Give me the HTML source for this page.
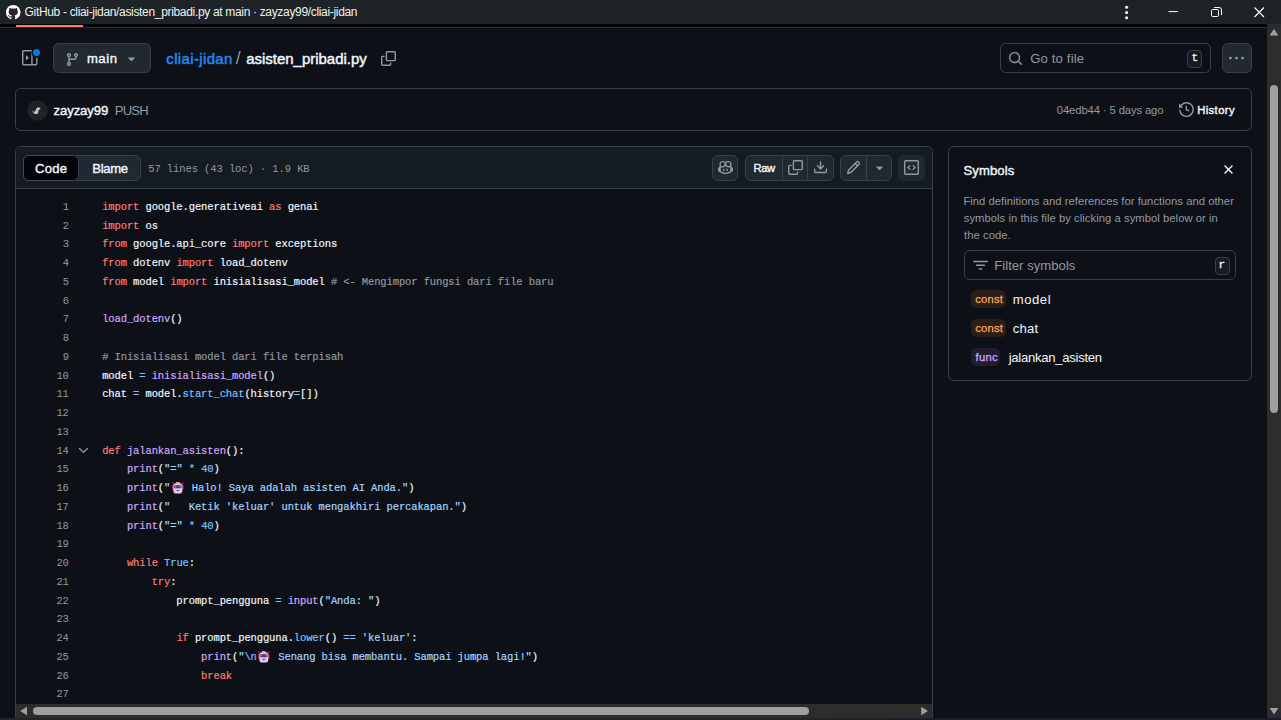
<!DOCTYPE html>
<html><head><meta charset="utf-8">
<style>
*{box-sizing:border-box;margin:0;padding:0}
html,body{width:1281px;height:720px;overflow:hidden;background:#0d1117;}
body{position:relative;font-family:"Liberation Sans",sans-serif;color:#f0f6fc;font-size:13px;}
.abs{position:absolute}
.t{position:absolute;white-space:pre;line-height:1;}
.mono{font-family:"Liberation Mono",monospace}
svg{position:absolute;overflow:visible}
/* title bar */
#titlebar{left:0;top:0;width:1281px;height:24px;background:#1e2327}
#blackband{left:0;top:24px;width:1267px;height:3px;background:#010409}
#hdrline{left:0;top:27px;width:1267px;height:1px;background:#2a313a}
#orange{left:15.5px;top:25px;width:67.5px;height:2.4px;background:#f78166}
/* scrollbars */
#vsb{left:1267px;top:24px;width:14px;height:694px;background:#2c2c2c}
#vthumb{left:1270px;top:85px;width:8px;height:328px;background:#9f9f9f;border-radius:4px}
#hsb{left:16px;top:704px;width:916px;height:14px;background:#2c2c2c}
#hthumb{left:33px;top:707px;width:776px;height:8px;background:#9f9f9f;border-radius:4px}
#botstrip{left:0;top:717.6px;width:1281px;height:2.4px;background:linear-gradient(90deg,#242424 0,#242424 62%,#1d1a2d 73%,#1d1a2d 100%)}
/* boxes */
.btn{position:absolute;background:#212830;border:1px solid #394049;border-radius:5.6px}
.box{position:absolute;border:1px solid #394049;border-radius:5.6px}

.ln{position:absolute;left:0;width:932px;height:18.75px}
.ln i{font-style:normal}
.no{position:absolute;right:863.2px;top:0;color:#9198a1}
.cd{position:absolute;left:102.2px;top:0;white-space:pre;-webkit-text-stroke:.18px}
.k{color:#ff7b72}.w{color:#f0f6fc}.c{color:#9198a1}.f{color:#d2a8ff}.b{color:#79c0ff}.s{color:#a5d6ff}
.emo{display:inline-block;width:15.4px;height:11.6px;position:relative;vertical-align:-2.5px;letter-spacing:0}
.emo svg{left:1.7px;top:0}
</style></head><body>
<!-- TITLE BAR -->
<div class="abs" id="titlebar"></div>
<div class="abs" id="blackband"></div>
<div class="abs" id="hdrline"></div>
<div class="abs" id="orange"></div>
<div class="t" id="tt" style="left:24.59px;top:5.89px;font-size:12px;color:#f0f0f0;letter-spacing:-0.327px">GitHub - cliai-jidan/asisten_pribadi.py at main · zayzay99/cliai-jidan</div>

<!-- CODE BOX -->
<div class="abs" style="left:15px;top:146px;width:918px;height:580px;border:1px solid #394049;border-radius:5.6px 5.6px 0 0;background:#0d1117"></div>
<div class="abs" style="left:16px;top:147px;width:916px;height:41.500px;background:#151b23;border-bottom:1px solid #394049;border-radius:4.6px 4.6px 0 0"></div>
<!-- segmented control -->
<div class="abs" style="left:23px;top:154.500px;width:117.600px;height:26.200px;background:#212830;border:1px solid #394049;border-radius:5.6px"></div>
<div class="abs" style="left:23px;top:154.500px;width:55.500px;height:26.200px;background:#010409;border:1px solid #3f4650;border-radius:5.6px"></div>
<div class="t" id="code" style="left:35.12px;top:161.96px;font-size:13.100px;-webkit-text-stroke:0.4px;letter-spacing:0.190px">Code</div>
<div class="t" id="blame" style="left:92.20px;top:161.96px;font-size:13.100px;-webkit-text-stroke:0.4px;letter-spacing:-0.292px">Blame</div>
<div class="t mono" id="stats" style="left:148.18px;top:164.00px;font-size:10.500px;color:#9198a1;letter-spacing:-0.093px">57 lines (43 loc) · 1.9 KB</div>
<!-- toolbar buttons -->
<div class="abs" style="left:712px;top:154.700px;width:26.200px;height:26.200px;border:1px solid #394049;border-radius:5.6px;background:#212830"></div>
<svg style="left:717.600px;top:160.300px" width="15" height="15" viewBox="0 0 16 16"><path fill="#9198a1" d="M7.998 15.035c-4.562 0-7.873-2.914-7.998-3.749V9.338c.085-.628.677-1.686 1.588-2.065.013-.07.024-.143.036-.218.029-.183.060-.384.126-.612-.201-.508-.254-1.084-.254-1.656 0-.870.128-1.769.693-2.484.579-.733 1.494-1.124 2.724-1.261 1.206-.134 2.262.034 2.944.765.050.053.096.108.139.165.044-.057.094-.112.143-.165.682-.731 1.738-.899 2.944-.765 1.230.137 2.145.528 2.724 1.261.566.715.693 1.614.693 2.484 0 .572-.053 1.148-.254 1.656.066.228.098.429.126.612.012.076.024.148.037.218.924.385 1.522 1.471 1.591 2.095v1.872c0 .766-3.351 3.795-8.002 3.795Zm0-1.485c2.280 0 4.584-1.110 5.002-1.433V7.862l-.023-.116c-.490.210-1.075.291-1.727.291-1.146 0-2.059-.327-2.710-.991A3.222 3.222 0 0 1 8 6.303a3.240 3.240 0 0 1-.544.743c-.650.664-1.563.991-2.710.991-.652 0-1.236-.081-1.727-.291l-.023.116v4.255c.419.323 2.722 1.433 5.002 1.433ZM6.762 2.830c-.193-.206-.637-.413-1.682-.297-1.019.113-1.479.404-1.713.700-.247.312-.369.789-.369 1.554 0 .793.129 1.171.308 1.371.162.181.519.379 1.442.379.853 0 1.339-.235 1.638-.540.315-.322.527-.827.617-1.553.117-.935-.037-1.395-.241-1.614Zm4.155-.297c-1.044-.116-1.488.091-1.681.297-.204.219-.359.679-.242 1.614.091.726.303 1.231.618 1.553.299.305.784.540 1.638.540.922 0 1.280-.198 1.442-.379.179-.200.308-.578.308-1.371 0-.765-.123-1.242-.370-1.554-.233-.296-.693-.587-1.713-.700Z"/><path fill="#9198a1" d="M6.250 9.037a.750.750 0 0 1 .750.750v1.501a.750.750 0 0 1-1.500 0V9.787a.750.750 0 0 1 .750-.750Zm4.250.750v1.501a.750.750 0 0 1-1.500 0V9.787a.750.750 0 0 1 1.500 0Z"/></svg>
<div class="abs" style="left:745.200px;top:154.700px;width:89px;height:26.200px;border:1px solid #394049;border-radius:5.6px;background:#212830"></div>
<div class="abs" style="left:782px;top:155.700px;width:1px;height:24.200px;background:#394049"></div>
<div class="abs" style="left:807px;top:155.700px;width:1px;height:24.200px;background:#394049"></div>
<div class="t" id="raw" style="left:753.52px;top:162.53px;font-size:11.250px;-webkit-text-stroke:0.4px;letter-spacing:-0.403px">Raw</div>
<svg style="left:788px;top:160.300px" width="15" height="15" viewBox="0 0 16 16"><path fill="#9198a1" d="M0 6.750C0 5.784.784 5 1.750 5h1.500a.750.750 0 0 1 0 1.500h-1.500a.250.250 0 0 0-.250.250v7.500c0 .138.112.250.250.250h7.500a.250.250 0 0 0 .250-.250v-1.500a.750.750 0 0 1 1.500 0v1.500A1.750 1.750 0 0 1 9.250 16h-7.500A1.750 1.750 0 0 1 0 14.250Z"/><path fill="#9198a1" d="M5 1.750C5 .784 5.784 0 6.750 0h7.500C15.216 0 16 .784 16 1.750v7.500A1.750 1.750 0 0 1 14.250 11h-7.500A1.750 1.750 0 0 1 5 9.250Zm1.750-.250a.250.250 0 0 0-.250.250v7.500c0 .138.112.250.250.250h7.500a.250.250 0 0 0 .250-.250v-7.500a.250.250 0 0 0-.250-.250Z"/></svg>
<svg style="left:812.6px;top:160.300px" width="15" height="15" viewBox="0 0 16 16"><path fill="#9198a1" d="M2.750 14A1.750 1.750 0 0 1 1 12.250v-2.500a.750.750 0 0 1 1.500 0v2.500c0 .138.112.250.250.250h10.500a.250.250 0 0 0 .250-.250v-2.500a.750.750 0 0 1 1.500 0v2.500A1.750 1.750 0 0 1 13.250 14Z"/><path fill="#9198a1" d="M7.250 7.689V2a.750.750 0 0 1 1.500 0v5.689l1.970-1.969a.749.749 0 1 1 1.060 1.060l-3.250 3.250a.749.749 0 0 1-1.060 0L4.220 6.780a.749.749 0 1 1 1.060-1.060l1.970 1.969Z"/></svg>
<div class="abs" style="left:840.200px;top:154.700px;width:52px;height:26.200px;border:1px solid #394049;border-radius:5.6px;background:#212830"></div>
<div class="abs" style="left:866px;top:155.700px;width:1px;height:24.200px;background:#394049"></div>
<svg style="left:845.800px;top:160.300px" width="15" height="15" viewBox="0 0 16 16"><path fill="#9198a1" d="M11.013 1.427a1.750 1.750 0 0 1 2.474 0l1.086 1.086a1.750 1.750 0 0 1 0 2.474l-8.610 8.610c-.210.210-.470.364-.756.445l-3.251.930a.750.750 0 0 1-.927-.928l.929-3.250c.081-.286.235-.547.445-.758l8.610-8.610Zm.176 4.823L9.750 4.810l-6.286 6.287a.253.253 0 0 0-.064.108l-.558 1.953 1.953-.558a.253.253 0 0 0 .108-.064Zm1.238-3.763a.250.250 0 0 0-.354 0L10.811 3.750l1.439 1.440 1.263-1.263a.250.250 0 0 0 0-.354Z"/></svg>
<svg style="left:871.500px;top:160.300px" width="15" height="15" viewBox="0 0 16 16"><path fill="#9198a1" d="m4.427 7.427 3.396 3.396a.250.250 0 0 0 .354 0l3.396-3.396A.250.250 0 0 0 11.396 7H4.604a.250.250 0 0 0-.177.427Z"/></svg>
<div class="abs" style="left:898.400px;top:154.700px;width:26.400px;height:26.200px;border-radius:5.6px;background:#212830"></div>
<svg style="left:904.100px;top:160.300px" width="15" height="15" viewBox="0 0 16 16"><path fill="#9198a1" d="M0 1.750C0 .784.784 0 1.750 0h12.500C15.216 0 16 .784 16 1.750v12.500A1.750 1.750 0 0 1 14.250 16H1.750A1.750 1.750 0 0 1 0 14.250Zm1.750-.250a.250.250 0 0 0-.250.250v12.500c0 .138.112.250.250.250h12.500a.250.250 0 0 0 .250-.250V1.750a.250.250 0 0 0-.250-.250Zm7.470 3.970a.750.750 0 0 1 1.060 0l2 2a.750.750 0 0 1 0 1.060l-2 2a.749.749 0 0 1-1.275-.326.749.749 0 0 1 .215-.734L10.690 8 9.220 6.530a.750.750 0 0 1 0-1.060ZM6.780 6.530 5.310 8l1.470 1.470a.749.749 0 0 1-.326 1.275.749.749 0 0 1-.734-.215l-2-2a.750.750 0 0 1 0-1.060l2-2a.751.751 0 0 1 1.042.018.751.751 0 0 1 .018 1.042Z"/></svg>

<!-- CODE -->
<div id="codearea" class="abs mono" style="left:0;top:0;width:932px;font-size:10.5px;line-height:18.75px;letter-spacing:-0.12px">
<div class="ln" style="top:197.88px"><span class="no">1</span><span class="cd"><i class="k">import</i><i class="w"> google.generativeai </i><i class="k">as</i><i class="w"> genai</i></span></div>
<div class="ln" style="top:216.88px"><span class="no">2</span><span class="cd"><i class="k">import</i><i class="w"> os</i></span></div>
<div class="ln" style="top:234.88px"><span class="no">3</span><span class="cd"><i class="k">from</i><i class="w"> google.api_core </i><i class="k">import</i><i class="w"> exceptions</i></span></div>
<div class="ln" style="top:253.88px"><span class="no">4</span><span class="cd"><i class="k">from</i><i class="w"> dotenv </i><i class="k">import</i><i class="w"> load_dotenv</i></span></div>
<div class="ln" style="top:272.88px"><span class="no">5</span><span class="cd"><i class="k">from</i><i class="w"> model </i><i class="k">import</i><i class="w"> inisialisasi_model </i><i class="c"># &lt;- Mengimpor fungsi dari file baru</i></span></div>
<div class="ln" style="top:291.88px"><span class="no">6</span><span class="cd"></span></div>
<div class="ln" style="top:309.88px"><span class="no">7</span><span class="cd"><i class="f">load_dotenv</i><i class="w">()</i></span></div>
<div class="ln" style="top:328.88px"><span class="no">8</span><span class="cd"></span></div>
<div class="ln" style="top:347.88px"><span class="no">9</span><span class="cd"><i class="c"># Inisialisasi model dari file terpisah</i></span></div>
<div class="ln" style="top:366.88px"><span class="no">10</span><span class="cd"><i class="w">model </i><i class="b">=</i><i class="w"> </i><i class="f">inisialisasi_model</i><i class="w">()</i></span></div>
<div class="ln" style="top:384.88px"><span class="no">11</span><span class="cd"><i class="w">chat </i><i class="b">=</i><i class="w"> model.</i><i class="b">start_chat</i><i class="w">(history</i><i class="b">=</i><i class="w">[])</i></span></div>
<div class="ln" style="top:403.88px"><span class="no">12</span><span class="cd"></span></div>
<div class="ln" style="top:422.88px"><span class="no">13</span><span class="cd"></span></div>
<div class="ln" style="top:441.88px"><span class="no">14</span><span class="cd"><i class="k">def</i><i class="w"> </i><i class="f">jalankan_asisten</i><i class="w">():</i></span></div>
<div class="ln" style="top:459.88px"><span class="no">15</span><span class="cd"><i class="w">    </i><i class="f">print</i><i class="w">(</i><i class="s">"="</i><i class="w"> </i><i class="b">*</i><i class="w"> </i><i class="b">40</i><i class="w">)</i></span></div>
<div class="ln" style="top:478.88px"><span class="no">16</span><span class="cd"><i class="w">    </i><i class="f">print</i><i class="w">(</i><i class="s">"</i><span class="emo"><svg width="11.6" height="11.6" viewBox="0 0 12.4 11.6" preserveAspectRatio="none"><rect x=".3" y=".2" width="1.3" height="2" fill="#c2185b"/><rect x="10.8" y=".2" width="1.3" height="2" fill="#c2185b"/><rect x="4" y="0" width="4.400" height="1.800" rx=".9" fill="#f2a33a"/><rect x=".2" y="3" width="1.500" height="5" rx=".7" fill="#e0265a"/><rect x="10.700" y="3" width="1.500" height="5" rx=".7" fill="#e0265a"/><rect x="1.400" y="1.200" width="9.600" height="10.400" rx="2.800" fill="#e3c4ec"/><rect x="2.200" y="3.300" width="8" height="2.900" rx="1.300" fill="#45306e"/><circle cx="3.900" cy="4.750" r="1" fill="#2aa7f0"/><circle cx="8.500" cy="4.750" r="1" fill="#2aa7f0"/><rect x="4.900" y="8" width="2.600" height="1.100" rx=".5" fill="#4a2a5a"/></svg></span><i class="s"> Halo! Saya adalah asisten AI Anda."</i><i class="w">)</i></span></div>
<div class="ln" style="top:497.88px"><span class="no">17</span><span class="cd"><i class="w">    </i><i class="f">print</i><i class="w">(</i><i class="s">"   Ketik 'keluar' untuk mengakhiri percakapan."</i><i class="w">)</i></span></div>
<div class="ln" style="top:516.88px"><span class="no">18</span><span class="cd"><i class="w">    </i><i class="f">print</i><i class="w">(</i><i class="s">"="</i><i class="w"> </i><i class="b">*</i><i class="w"> </i><i class="b">40</i><i class="w">)</i></span></div>
<div class="ln" style="top:534.88px"><span class="no">19</span><span class="cd"></span></div>
<div class="ln" style="top:553.88px"><span class="no">20</span><span class="cd"><i class="w">    </i><i class="k">while</i><i class="w"> </i><i class="b">True</i><i class="w">:</i></span></div>
<div class="ln" style="top:572.88px"><span class="no">21</span><span class="cd"><i class="w">        </i><i class="k">try</i><i class="w">:</i></span></div>
<div class="ln" style="top:591.88px"><span class="no">22</span><span class="cd"><i class="w">            prompt_pengguna </i><i class="b">=</i><i class="w"> </i><i class="f">input</i><i class="w">(</i><i class="s">"Anda: "</i><i class="w">)</i></span></div>
<div class="ln" style="top:609.88px"><span class="no">23</span><span class="cd"></span></div>
<div class="ln" style="top:628.88px"><span class="no">24</span><span class="cd"><i class="w">            </i><i class="k">if</i><i class="w"> prompt_pengguna.</i><i class="b">lower</i><i class="w">() </i><i class="b">==</i><i class="w"> </i><i class="s">'keluar'</i><i class="w">:</i></span></div>
<div class="ln" style="top:647.88px"><span class="no">25</span><span class="cd"><i class="w">                </i><i class="f">print</i><i class="w">(</i><i class="s">"</i><i class="b">\n</i><span class="emo"><svg width="11.6" height="11.6" viewBox="0 0 12.4 11.6" preserveAspectRatio="none"><rect x=".3" y=".2" width="1.3" height="2" fill="#c2185b"/><rect x="10.8" y=".2" width="1.3" height="2" fill="#c2185b"/><rect x="4" y="0" width="4.400" height="1.800" rx=".9" fill="#f2a33a"/><rect x=".2" y="3" width="1.500" height="5" rx=".7" fill="#e0265a"/><rect x="10.700" y="3" width="1.500" height="5" rx=".7" fill="#e0265a"/><rect x="1.400" y="1.200" width="9.600" height="10.400" rx="2.800" fill="#e3c4ec"/><rect x="2.200" y="3.300" width="8" height="2.900" rx="1.300" fill="#45306e"/><circle cx="3.900" cy="4.750" r="1" fill="#2aa7f0"/><circle cx="8.500" cy="4.750" r="1" fill="#2aa7f0"/><rect x="4.900" y="8" width="2.600" height="1.100" rx=".5" fill="#4a2a5a"/></svg></span><i class="s"> Senang bisa membantu. Sampai jumpa lagi!"</i><i class="w">)</i></span></div>
<div class="ln" style="top:666.88px"><span class="no">26</span><span class="cd"><i class="w">                </i><i class="k">break</i></span></div>
<div class="ln" style="top:684.88px"><span class="no">27</span><span class="cd"></span></div>
</div>
<svg style="left:75.9px;top:442.5px" width="15" height="15" viewBox="0 0 16 16"><path fill="#9198a1" d="M12.780 5.220a.749.749 0 0 1 0 1.060l-4.250 4.250a.749.749 0 0 1-1.060 0L3.220 6.280a.749.749 0 1 1 1.060-1.060L8 8.939l3.720-3.719a.749.749 0 0 1 1.060 0Z"/></svg>

<!-- SYMBOLS PANEL -->
<div class="box" style="left:948px;top:146px;width:304px;height:234.500px"></div>
<div class="t" id="sym" style="left:963.39px;top:163.96px;font-size:13.100px;-webkit-text-stroke:0.4px;letter-spacing:0.117px">Symbols</div>
<svg style="left:1221px;top:162.400px" width="15" height="15" viewBox="0 0 16 16"><path fill="#f0f6fc" d="M3.720 3.720a.750.750 0 0 1 1.060 0L8 6.940l3.220-3.220a.749.749 0 0 1 1.275.326.749.749 0 0 1-.215.734L9.060 8l3.220 3.220a.749.749 0 0 1-.326 1.275.749.749 0 0 1-.734-.215L8 9.060l-3.220 3.220a.751.751 0 0 1-1.042-.018.751.751 0 0 1-.018-1.042L6.940 8 3.720 4.780a.750.750 0 0 1 0-1.060Z"/></svg>
<div class="t" id="d1" style="left:963.39px;top:195.53px;font-size:11.250px;color:#9198a1;letter-spacing:0.030px">Find definitions and references for functions and other</div>
<div class="t" id="d2" style="left:963.73px;top:212.53px;font-size:11.250px;color:#9198a1;letter-spacing:0.041px">symbols in this file by clicking a symbol below or in</div>
<div class="t" id="d3" style="left:964.06px;top:229.53px;font-size:11.250px;color:#9198a1;letter-spacing:0.049px">the code.</div>
<div class="box" style="left:964px;top:250.400px;width:271.600px;height:29.600px"></div>
<svg style="left:972.500px;top:257.800px" width="15" height="15" viewBox="0 0 16 16"><path fill="#9198a1" d="M.750 3h14.500a.750.750 0 0 1 0 1.500H.750a.750.750 0 0 1 0-1.500ZM3 7.750A.750.750 0 0 1 3.750 7h8.500a.750.750 0 0 1 0 1.500h-8.500A.750.750 0 0 1 3 7.750Zm3 4a.750.750 0 0 1 .750-.750h2.500a.750.750 0 0 1 0 1.500h-2.500a.750.750 0 0 1-.750-.750Z"/></svg>
<div class="t" id="fs" style="left:994.22px;top:258.96px;font-size:13.100px;color:#9198a1;letter-spacing:0.031px">Filter symbols</div>
<div class="abs" style="left:1214.5px;top:257.2px;width:15px;height:17.8px;background:#151b23;border:1px solid #394049;border-radius:4px"></div>
<div class="t mono" style="left:1218.600px;top:260.200px;font-size:11px;color:#f0f6fc;-webkit-text-stroke:.3px">r</div>
<!-- symbol rows -->
<div class="abs" style="left:971.200px;top:290px;width:34.800px;height:18.400px;border-radius:5.6px;background:#2b1d17"></div>
<div class="t" id="c1" style="left:975.32px;top:293.53px;font-size:11.250px;color:#ffa657;-webkit-text-stroke:0.25px;letter-spacing:0.164px">const</div>
<div class="t" id="s1" style="left:1012.72px;top:292.96px;font-size:13.100px;letter-spacing:0.539px">model</div>
<div class="abs" style="left:971.200px;top:318.600px;width:34.800px;height:18.400px;border-radius:5.6px;background:#2b1d17"></div>
<div class="t" id="c2" style="left:975.32px;top:322.53px;font-size:11.250px;color:#ffa657;-webkit-text-stroke:0.25px;letter-spacing:0.164px">const</div>
<div class="t" id="s2" style="left:1012.85px;top:321.96px;font-size:13.100px;letter-spacing:0.179px">chat</div>
<div class="abs" style="left:971.200px;top:347.600px;width:29.300px;height:18.400px;border-radius:5.6px;background:#221c30"></div>
<div class="t" id="c3" style="left:975.55px;top:351.53px;font-size:11.250px;color:#d2a8ff;-webkit-text-stroke:0.25px;letter-spacing:0.296px">func</div>
<div class="t" id="s3" style="left:1008.74px;top:350.96px;font-size:13.100px;letter-spacing:-0.282px">jalankan_asisten</div>

<!-- SCROLLBARS -->
<div class="abs" id="vsb"></div>
<div class="abs" id="vthumb"></div>
<div class="abs" id="hsb"></div>
<div class="abs" id="hthumb"></div>
<div class="abs" id="botstrip"></div>

<!-- GitHub mark in title bar -->
<div class="abs" style="left:5.5px;top:4.5px;width:15.5px;height:15.5px;background:#2b2426"></div>
<svg style="left:6px;top:5px" width="14.5" height="14.5" viewBox="0 0 16 16"><path fill="#ffffff" d="M8 0c4.42 0 8 3.58 8 8a8.013 8.013 0 0 1-5.45 7.59c-.4.08-.55-.17-.55-.38 0-.27.01-1.13.01-2.2 0-.75-.25-1.23-.54-1.48 1.78-.2 3.65-.88 3.65-3.95 0-.88-.31-1.59-.82-2.15.08-.2.36-1.02-.08-2.12 0 0-.67-.22-2.2.82-.64-.18-1.32-.27-2-.27-.68 0-1.36.09-2 .27-1.53-1.03-2.2-.82-2.2-.82-.44 1.1-.16 1.92-.08 2.12-.51.56-.82 1.28-.82 2.15 0 3.06 1.86 3.75 3.64 3.95-.23.2-.44.55-.51 1.07-.46.21-1.61.55-2.33-.66-.15-.24-.6-.83-1.23-.82-.67.01-.27.38.01.53.34.19.73.9.82 1.13.16.45.68 1.31 2.69.94 0 .67.01 1.3.01 1.49 0 .21-.15.45-.55.38A7.995 7.995 0 0 1 0 8c0-4.42 3.58-8 8-8Z"/></svg>
<!-- window controls -->
<svg style="left:1100px;top:0" width="181" height="24" viewBox="0 0 181 24">
 <g fill="#ffffff"><circle cx="26.6" cy="7.2" r="1.5"/><circle cx="26.6" cy="12.5" r="1.5"/><circle cx="26.6" cy="17.8" r="1.5"/></g>
 <path d="M68.500 11.600h9.300" stroke="#fff" stroke-width="1" fill="none"/>
 <rect x="111.5" y="9.5" width="7" height="7" rx="1.2" stroke="#fff" stroke-width="1" fill="none"/>
 <path d="M114 7.5h5a2.5 2.5 0 0 1 2.500 2.500v5" stroke="#fff" stroke-width="1" fill="none"/>
 <path d="M154.500 7.500l9.500 9.500M164 7.500l-9.500 9.500" stroke="#fff" stroke-width="1.1" fill="none"/>
</svg>
<!-- scrollbar arrows -->
<svg style="left:1267px;top:24px" width="14" height="694" viewBox="0 0 14 694"><path fill="#9f9f9f" d="M7 4.900L11.400 11.400H2.600Z M7 690.400L11.400 683.900H2.600Z"/></svg>
<svg style="left:16px;top:704px" width="916" height="14" viewBox="0 0 916 14"><path fill="#9f9f9f" d="M4.200 7L11 2.800v8.400Z M912 7L905.200 2.800v8.400Z"/></svg>

<!-- HEADER ROW -->
<svg style="left:22.4px;top:50.4px" width="15.5" height="15.5" viewBox="0 0 16 16"><path fill="#9198a1" d="M6.823 7.823a.25.25 0 0 1 0 .354l-2.396 2.396A.25.25 0 0 1 4 10.396V5.604a.25.25 0 0 1 .427-.177Z"/><path fill="#9198a1" d="M1.750 0h12.500C15.216 0 16 .784 16 1.750v12.500A1.750 1.750 0 0 1 14.250 16H1.750A1.750 1.750 0 0 1 0 14.250V1.750C0 .784.784 0 1.750 0ZM1.500 1.750v12.500c0 .138.112.250.250.250H9.500v-13H1.750a.250.250 0 0 0-.250.250ZM11 14.500h3.250a.250.250 0 0 0 .250-.250V1.750a.250.250 0 0 0-.250-.250H11Z"/></svg>
<div class="abs" style="left:32.85px;top:48.75px;width:7.5px;height:7.5px;border-radius:50%;background:#0c76f0;box-shadow:0 0 0 1.7px #0d1117"></div>
<div class="btn" style="left:52.500px;top:43px;width:98.500px;height:30px"></div>
<svg style="left:64.7px;top:51.5px" width="15" height="15" viewBox="0 0 16 16"><path fill="#9198a1" d="M9.500 3.250a2.250 2.250 0 1 1 3 2.122V6A2.500 2.500 0 0 1 10 8.500H6a1 1 0 0 0-1 1v1.128a2.251 2.251 0 1 1-1.500 0V5.372a2.250 2.250 0 1 1 1.500 0v1.836A2.493 2.493 0 0 1 6 7h4a1 1 0 0 0 1-1v-.628A2.250 2.250 0 0 1 9.500 3.250Zm-6 0a.750.750 0 1 0 1.500 0 .750.750 0 0 0-1.500 0Zm8.250-.750a.750.750 0 1 0 0 1.500.750.750 0 0 0 0-1.500ZM4.250 12a.750.750 0 1 0 0 1.500.750.750 0 0 0 0-1.500Z"/></svg>
<div class="t" id="main" style="left:86.89px;top:51.96px;font-size:13.100px;-webkit-text-stroke:0.4px;letter-spacing:0.564px">main</div>
<svg style="left:123.800px;top:51px" width="15" height="15" viewBox="0 0 16 16"><path fill="#9198a1" d="m4.427 7.427 3.396 3.396a.250.250 0 0 0 .354 0l3.396-3.396A.250.250 0 0 0 11.396 7H4.604a.250.250 0 0 0-.177.427Z"/></svg>
<div class="t" id="bc1" style="left:166.33px;top:51.35px;font-size:15px;color:#1f8cf5;-webkit-text-stroke:0.45px;letter-spacing:0.356px">cliai-jidan</div>
<div class="t" id="bc2" style="left:235.63px;top:50.24px;font-size:17.5px;color:#9198a1">/</div>
<div class="t" id="bc3" style="left:246.16px;top:51.35px;font-size:15px;-webkit-text-stroke:0.45px;letter-spacing:-0.014px">asisten_pribadi.py</div>
<svg style="left:381px;top:50.500px" width="15" height="15" viewBox="0 0 16 16"><path fill="#9198a1" d="M0 6.750C0 5.784.784 5 1.750 5h1.500a.750.750 0 0 1 0 1.500h-1.500a.250.250 0 0 0-.250.250v7.500c0 .138.112.250.250.250h7.500a.250.250 0 0 0 .250-.250v-1.500a.750.750 0 0 1 1.500 0v1.500A1.750 1.750 0 0 1 9.250 16h-7.500A1.750 1.750 0 0 1 0 14.250Z"/><path fill="#9198a1" d="M5 1.750C5 .784 5.784 0 6.750 0h7.500C15.216 0 16 .784 16 1.750v7.500A1.750 1.750 0 0 1 14.250 11h-7.500A1.750 1.750 0 0 1 5 9.250Zm1.750-.250a.250.250 0 0 0-.250.250v7.500c0 .138.112.250.250.250h7.500a.250.250 0 0 0 .250-.250v-7.500a.250.250 0 0 0-.250-.250Z"/></svg>
<!-- search -->
<div class="box" style="left:1000px;top:43px;width:210.600px;height:30px"></div>
<svg style="left:1007.6px;top:51px" width="15" height="15" viewBox="0 0 16 16"><path fill="#9198a1" d="M10.680 11.740a6 6 0 0 1-7.922-8.982 6 6 0 0 1 8.982 7.922l3.040 3.040a.749.749 0 0 1-.326 1.275.749.749 0 0 1-.734-.215ZM11.500 7a4.499 4.499 0 1 0-8.997 0A4.499 4.499 0 0 0 11.500 7Z"/></svg>
<div class="t" id="gtf" style="left:1030.16px;top:51.96px;font-size:13.100px;color:#9198a1;letter-spacing:0.173px">Go to file</div>
<div class="abs" style="left:1187.2px;top:50.2px;width:15px;height:17.6px;background:#151b23;border:1px solid #394049;border-radius:4px"></div>
<div class="t mono" style="left:1191.500px;top:53px;font-size:11px;color:#f0f6fc;-webkit-text-stroke:.3px">t</div>
<div class="btn" style="left:1222px;top:43px;width:30px;height:30px"></div>
<svg style="left:1228.8px;top:50.500px" width="15" height="15" viewBox="0 0 16 16"><path fill="#9198a1" d="M8 9a1.500 1.500 0 1 0 0-3 1.500 1.500 0 0 0 0 3ZM1.500 9a1.500 1.500 0 1 0 0-3 1.500 1.500 0 0 0 0 3Zm13 0a1.500 1.500 0 1 0 0-3 1.500 1.500 0 0 0 0 3Z"/></svg>

<!-- COMMIT ROW -->
<div class="box" style="left:15px;top:88px;width:1237px;height:43px"></div>
<div class="abs" style="left:27.7px;top:100.7px;width:19.6px;height:19.6px;border-radius:50%;background:#202124;box-shadow:0 0 0 .5px #2c2f33"></div>
<svg style="left:27.3px;top:100.6px" width="20.4" height="20.4" viewBox="27.3 100.3 20.4 20.4"><path d="M29 113h17.500" stroke="#303236" stroke-width=".7" fill="none"/><path fill="#c4c4c4" d="M32.600 109.600c.900 1.100 1.700 1.500 2.600 1.500 .500-1.700 1.200-3.100 2.300-4.300h3v2.300h-1.700c.200 1.500-.200 2.800-1.100 4.300h-1.600c-1.700-.300-2.900-1.700-3.500-3.800Z"/></svg>
<div class="t" id="zz" style="left:53.60px;top:103.96px;font-size:13.100px;-webkit-text-stroke:0.4px;letter-spacing:-0.101px">zayzay99</div>
<div class="t" id="push" style="left:114.84px;top:103.96px;font-size:13.100px;color:#9198a1;letter-spacing:-0.842px">PUSH</div>
<div class="t" id="sha" style="left:1056.83px;top:104.53px;font-size:11.250px;color:#9198a1;letter-spacing:-0.115px">04edb44 · 5 days ago</div>
<svg style="left:1179.2px;top:101.800px" width="15" height="15" viewBox="0 0 16 16"><path fill="#9198a1" d="m.427 1.927 1.215 1.215a8.002 8.002 0 1 1-1.600 5.685.750.750 0 1 1 1.493-.154 6.500 6.500 0 1 0 1.180-4.458l1.358 1.358A.250.250 0 0 1 3.896 6H.250A.250.250 0 0 1 0 5.750V2.104a.250.250 0 0 1 .427-.177ZM7.750 4a.750.750 0 0 1 .750.750v2.992l2.028.812a.750.750 0 0 1-.557 1.392l-2.500-1A.751.751 0 0 1 7 8.250v-3.500A.750.750 0 0 1 7.750 4Z"/></svg>
<div class="t" id="hist" style="left:1197.17px;top:104.53px;font-size:11.250px;-webkit-text-stroke:0.4px;letter-spacing:0.406px">History</div>
</body></html>
